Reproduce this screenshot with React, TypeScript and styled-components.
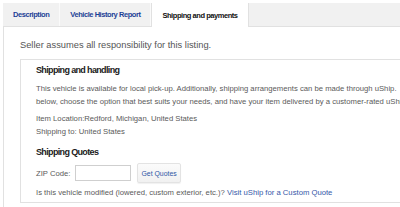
import React from "react";
import styled, { createGlobalStyle } from "styled-components";

const GlobalStyle = createGlobalStyle`
  html, body {
    margin: 0;
    padding: 0;
    background: #fff;
    overflow: hidden;
  }
  body {
    font-family: "Liberation Sans", Arial, sans-serif;
  }
`;

const Page = styled.div`
  padding: 3px 0 0 3px;
  width: 700px;
`;

const TabBar = styled.div`
  display: flex;
  height: 23px;
  background: #f1f1f1;
  border-bottom: 1px solid #e1e1e1;
`;

const Tab = styled.div<{ $active?: boolean }>`
  display: flex;
  align-items: center;
  padding: 0 10px;
  font-size: 7.5px;
  font-weight: bold;
  letter-spacing: -0.45px;
  color: ${(p) => (p.$active ? "#111" : "#1d3f96")};
  border-right: 1px solid ${(p) => (p.$active ? "#e1e1e1" : "#fafafa")};
  background: ${(p) => (p.$active ? "#fff" : "transparent")};
  height: ${(p) => (p.$active ? "24px" : "23px")};
  box-sizing: border-box;
  ${(p) => p.$active && "border-left: 1px solid #e1e1e1; margin-bottom: -1px;"}
`;

const Panel = styled.div`
  border-left: 1px solid #e1e1e1;
  padding: 12px 0 10px 16px;
`;

const Note = styled.p`
  margin: 0;
  font-size: 9.3px;
  line-height: 12px;
  color: #555;
`;

const Box = styled.div`
  margin-top: 8px;
  width: 600px;
  border: 1px solid #e1e1e1;
  padding: 4px 15px 3px;
`;

const Heading = styled.h3<{ $gap?: number }>`
  margin: ${(p) => p.$gap ?? 0}px 0 0;
  font-size: 9px;
  line-height: 12px;
  font-weight: bold;
  letter-spacing: -0.65px;
  color: #1a1a1a;
`;

const Text = styled.p<{ $gap?: number }>`
  margin: ${(p) => p.$gap ?? 0}px 0 0;
  font-size: 7.7px;
  line-height: 13px;
  color: #5a5a5a;
  white-space: nowrap;
`;

const ZipRow = styled.div`
  display: flex;
  align-items: center;
  gap: 5px;
  margin-top: 5px;
  height: 20px;
  font-size: 7.7px;
  color: #5a5a5a;
`;

const ZipInput = styled.input`
  width: 56px;
  height: 16px;
  box-sizing: border-box;
  border: 1px solid #cfcfcf;
  margin: 0;
  padding: 0 3px;
  font: inherit;
`;

const QuoteButton = styled.button`
  height: 20px;
  margin-left: 1px;
  padding: 0 3px;
  border: 1px solid #e3e3e3;
  border-radius: 2px;
  background: linear-gradient(#fbfbfb, #f1f1f1);
  box-shadow: 0 1px 1px rgba(0, 0, 0, 0.06);
  font-family: inherit;
  font-size: 6.9px;
  color: #2f55a4;
`;

const Link = styled.a`
  color: #3558a8;
  text-decoration: none;
`;

export default function App() {
  return (
    <Page>
      <GlobalStyle />
      <TabBar>
        <Tab>Description</Tab>
        <Tab>Vehicle History Report</Tab>
        <Tab $active>Shipping and payments</Tab>
      </TabBar>
      <Panel>
        <Note>Seller assumes all responsibility for this listing.</Note>
        <Box>
          <Heading>Shipping and handling</Heading>
          <Text $gap={6}>
            This vehicle is available for local pick-up. Additionally, shipping arrangements can be made through uShip.
            <br />
            below, choose the option that best suits your needs, and have your item delivered by a customer-rated uShip service provider.
          </Text>
          <Text $gap={4}>Item Location:Redford, Michigan, United States</Text>
          <Text>Shipping to: United States</Text>
          <Heading $gap={8}>Shipping Quotes</Heading>
          <ZipRow>
            <span>ZIP Code:</span>
            <ZipInput type="text" />
            <QuoteButton>Get Quotes</QuoteButton>
          </ZipRow>
          <Text $gap={3}>
            Is this vehicle modified (lowered, custom exterior, etc.)? <Link href="#">Visit uShip for a Custom Quote</Link>
          </Text>
        </Box>
      </Panel>
    </Page>
  );
}
